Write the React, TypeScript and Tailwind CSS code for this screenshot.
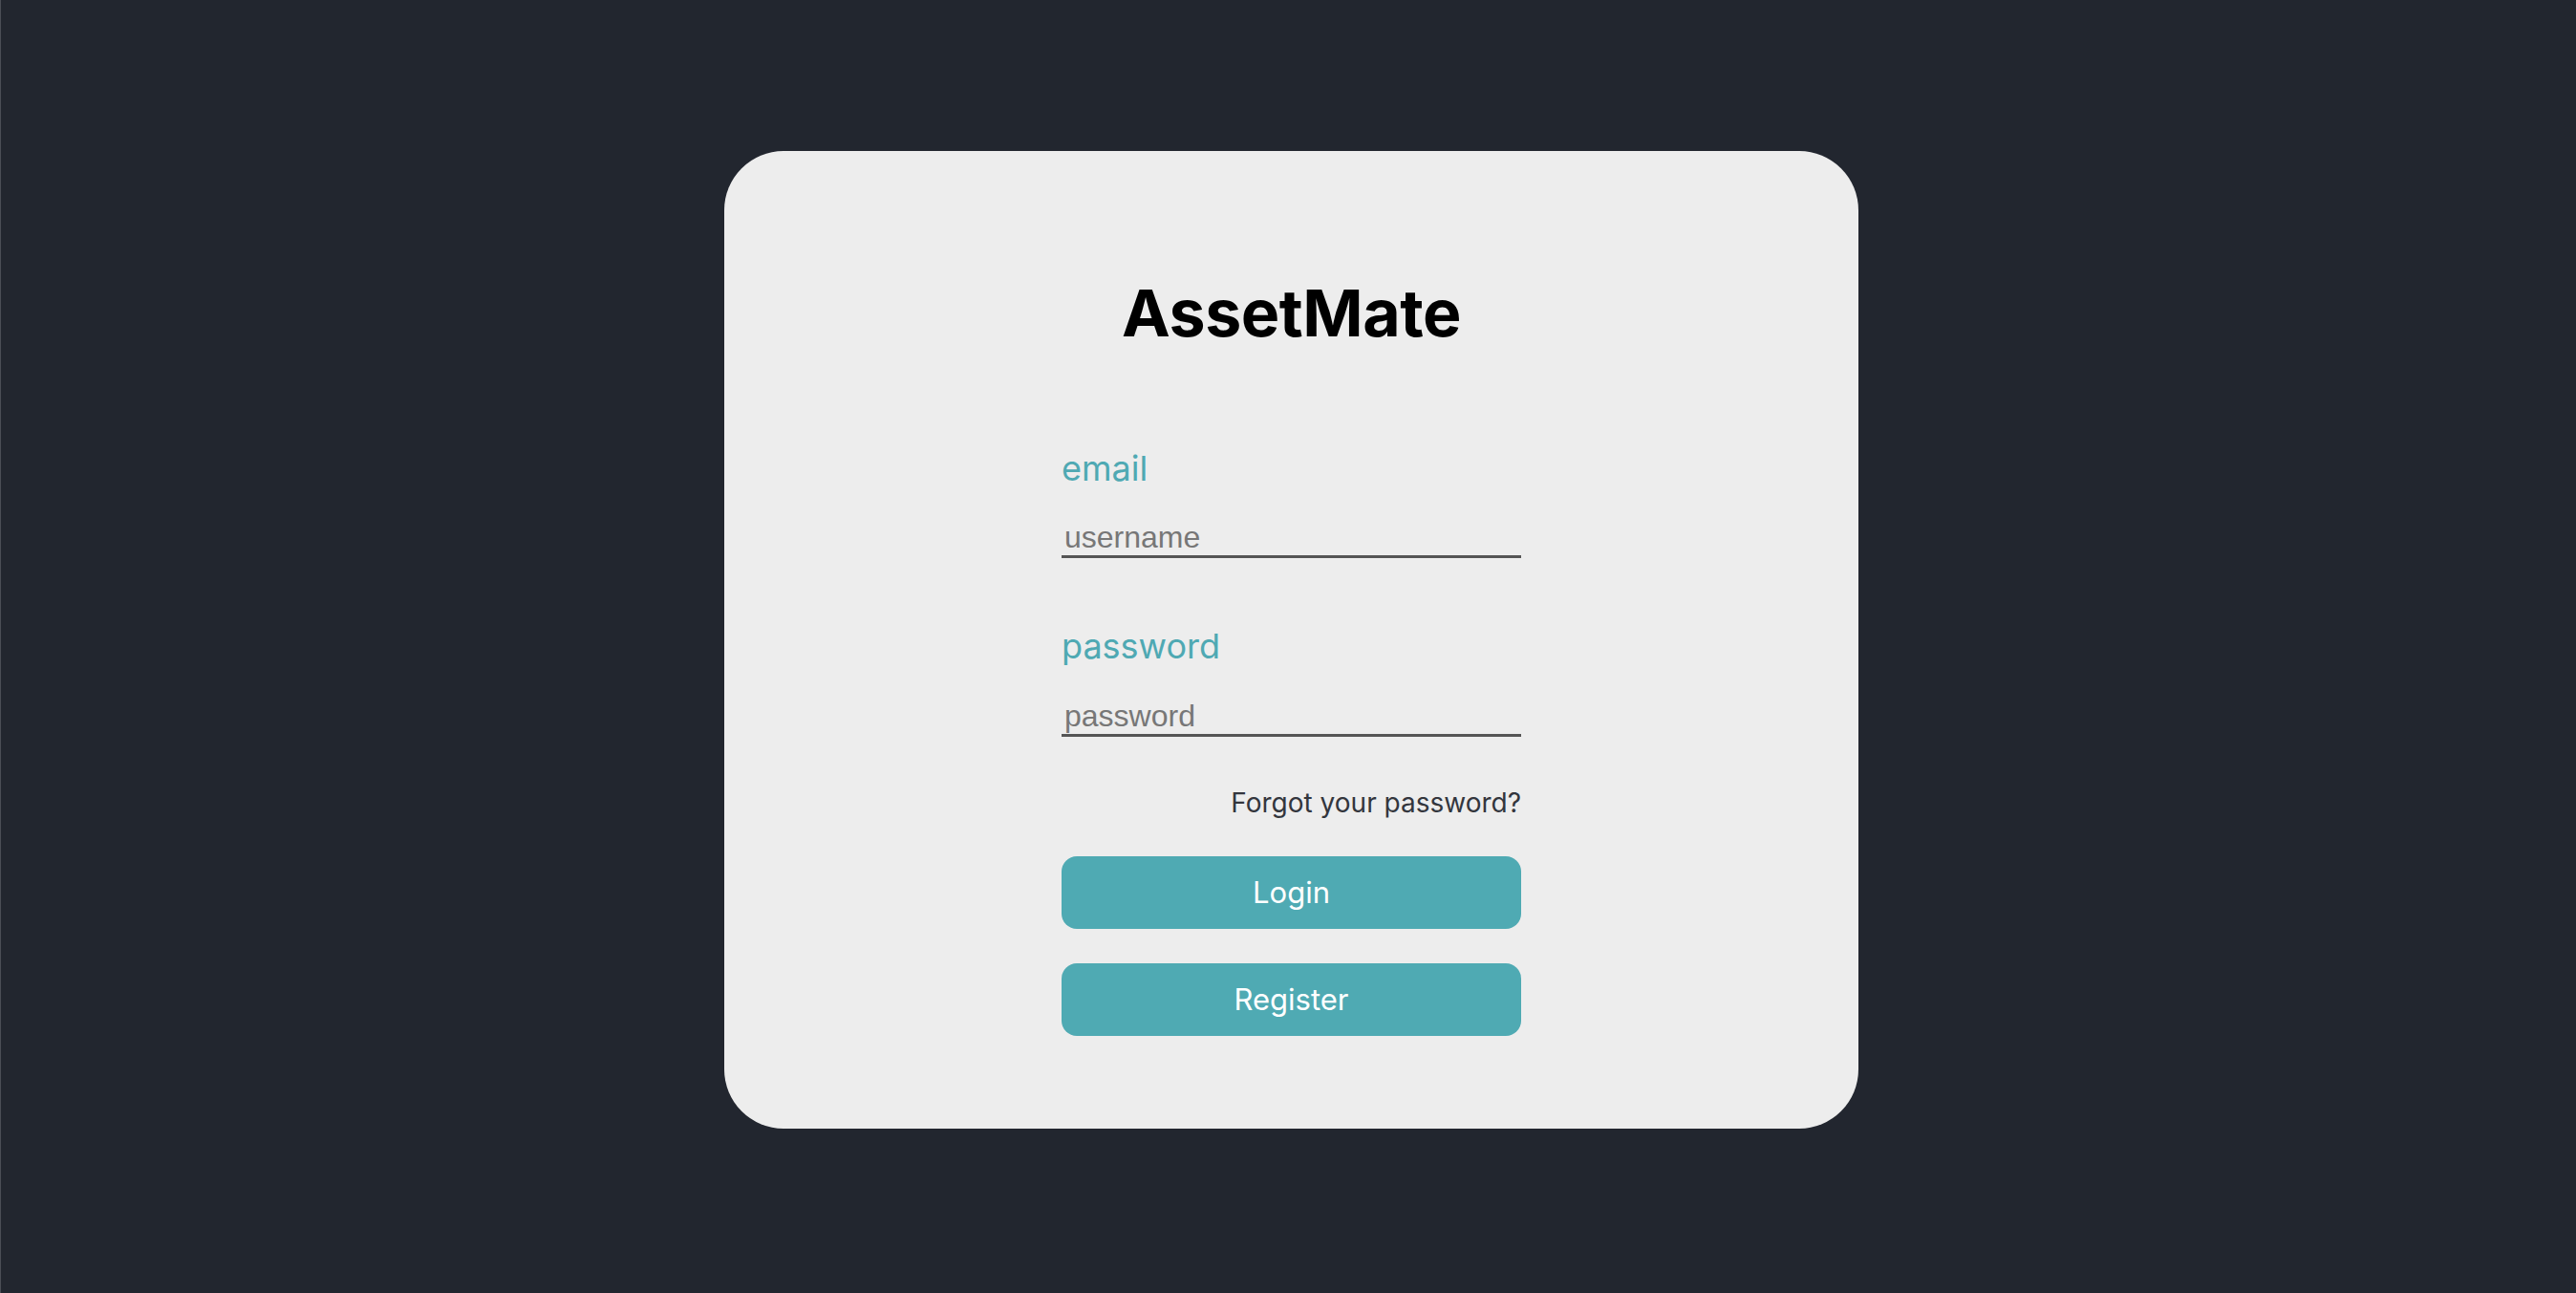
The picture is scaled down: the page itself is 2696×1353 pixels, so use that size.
import { useState } from 'react';

const sans = "font-['Inter','Noto_Sans',sans-serif]";

export default function App() {
  const [email, setEmail] = useState('');
  const [password, setPassword] = useState('');

  return (
    <div className="flex h-screen w-full items-center justify-center border-l border-[#4a4d55] bg-[#22262f] pb-[14px] pl-[6px]">
      <div className="flex h-[1023px] w-[1187px] flex-col items-center rounded-[62px] bg-[#ededed] pt-[129px]">
        <h1 className={`${sans} text-[68px] font-bold leading-[80px] tracking-[-0.5px] text-black`}>
          AssetMate
        </h1>

        <form className="mt-[101px] flex w-[481px] flex-col" onSubmit={(e) => e.preventDefault()}>
          <label className={`${sans} text-[36px] leading-[44px] text-[#4fa9b3]`}>email</label>
          <input
            type="text"
            placeholder="username"
            value={email}
            onChange={(e) => setEmail(e.target.value)}
            className="mt-[30px] h-[42px] w-full border-b-[3px] border-[#555] bg-transparent px-[3px] font-['Liberation_Sans',Arial,sans-serif] text-[32px] text-[#333] outline-none placeholder:text-[#777]"
          />

          <label className={`${sans} mt-[70px] text-[36px] leading-[44px] text-[#4fa9b3]`}>password</label>
          <input
            type="password"
            placeholder="password"
            value={password}
            onChange={(e) => setPassword(e.target.value)}
            className="mt-[31px] h-[42px] w-full border-b-[3px] border-[#555] bg-transparent px-[3px] font-['Liberation_Sans',Arial,sans-serif] text-[32px] text-[#333] outline-none placeholder:text-[#777]"
          />

          <a href="#" className={`${sans} mt-[51px] self-end text-[28px] leading-[36px] text-[#33363d]`}>
            Forgot your password?
          </a>

          <button
            type="submit"
            className={`${sans} mt-[38px] h-[76px] w-full rounded-[16px] bg-[#4faab3] text-[31px] text-white`}
          >
            Login
          </button>
          <button
            type="button"
            className={`${sans} mt-[36px] h-[76px] w-full rounded-[16px] bg-[#4faab3] text-[31px] text-white`}
          >
            Register
          </button>
        </form>
      </div>
    </div>
  );
}
